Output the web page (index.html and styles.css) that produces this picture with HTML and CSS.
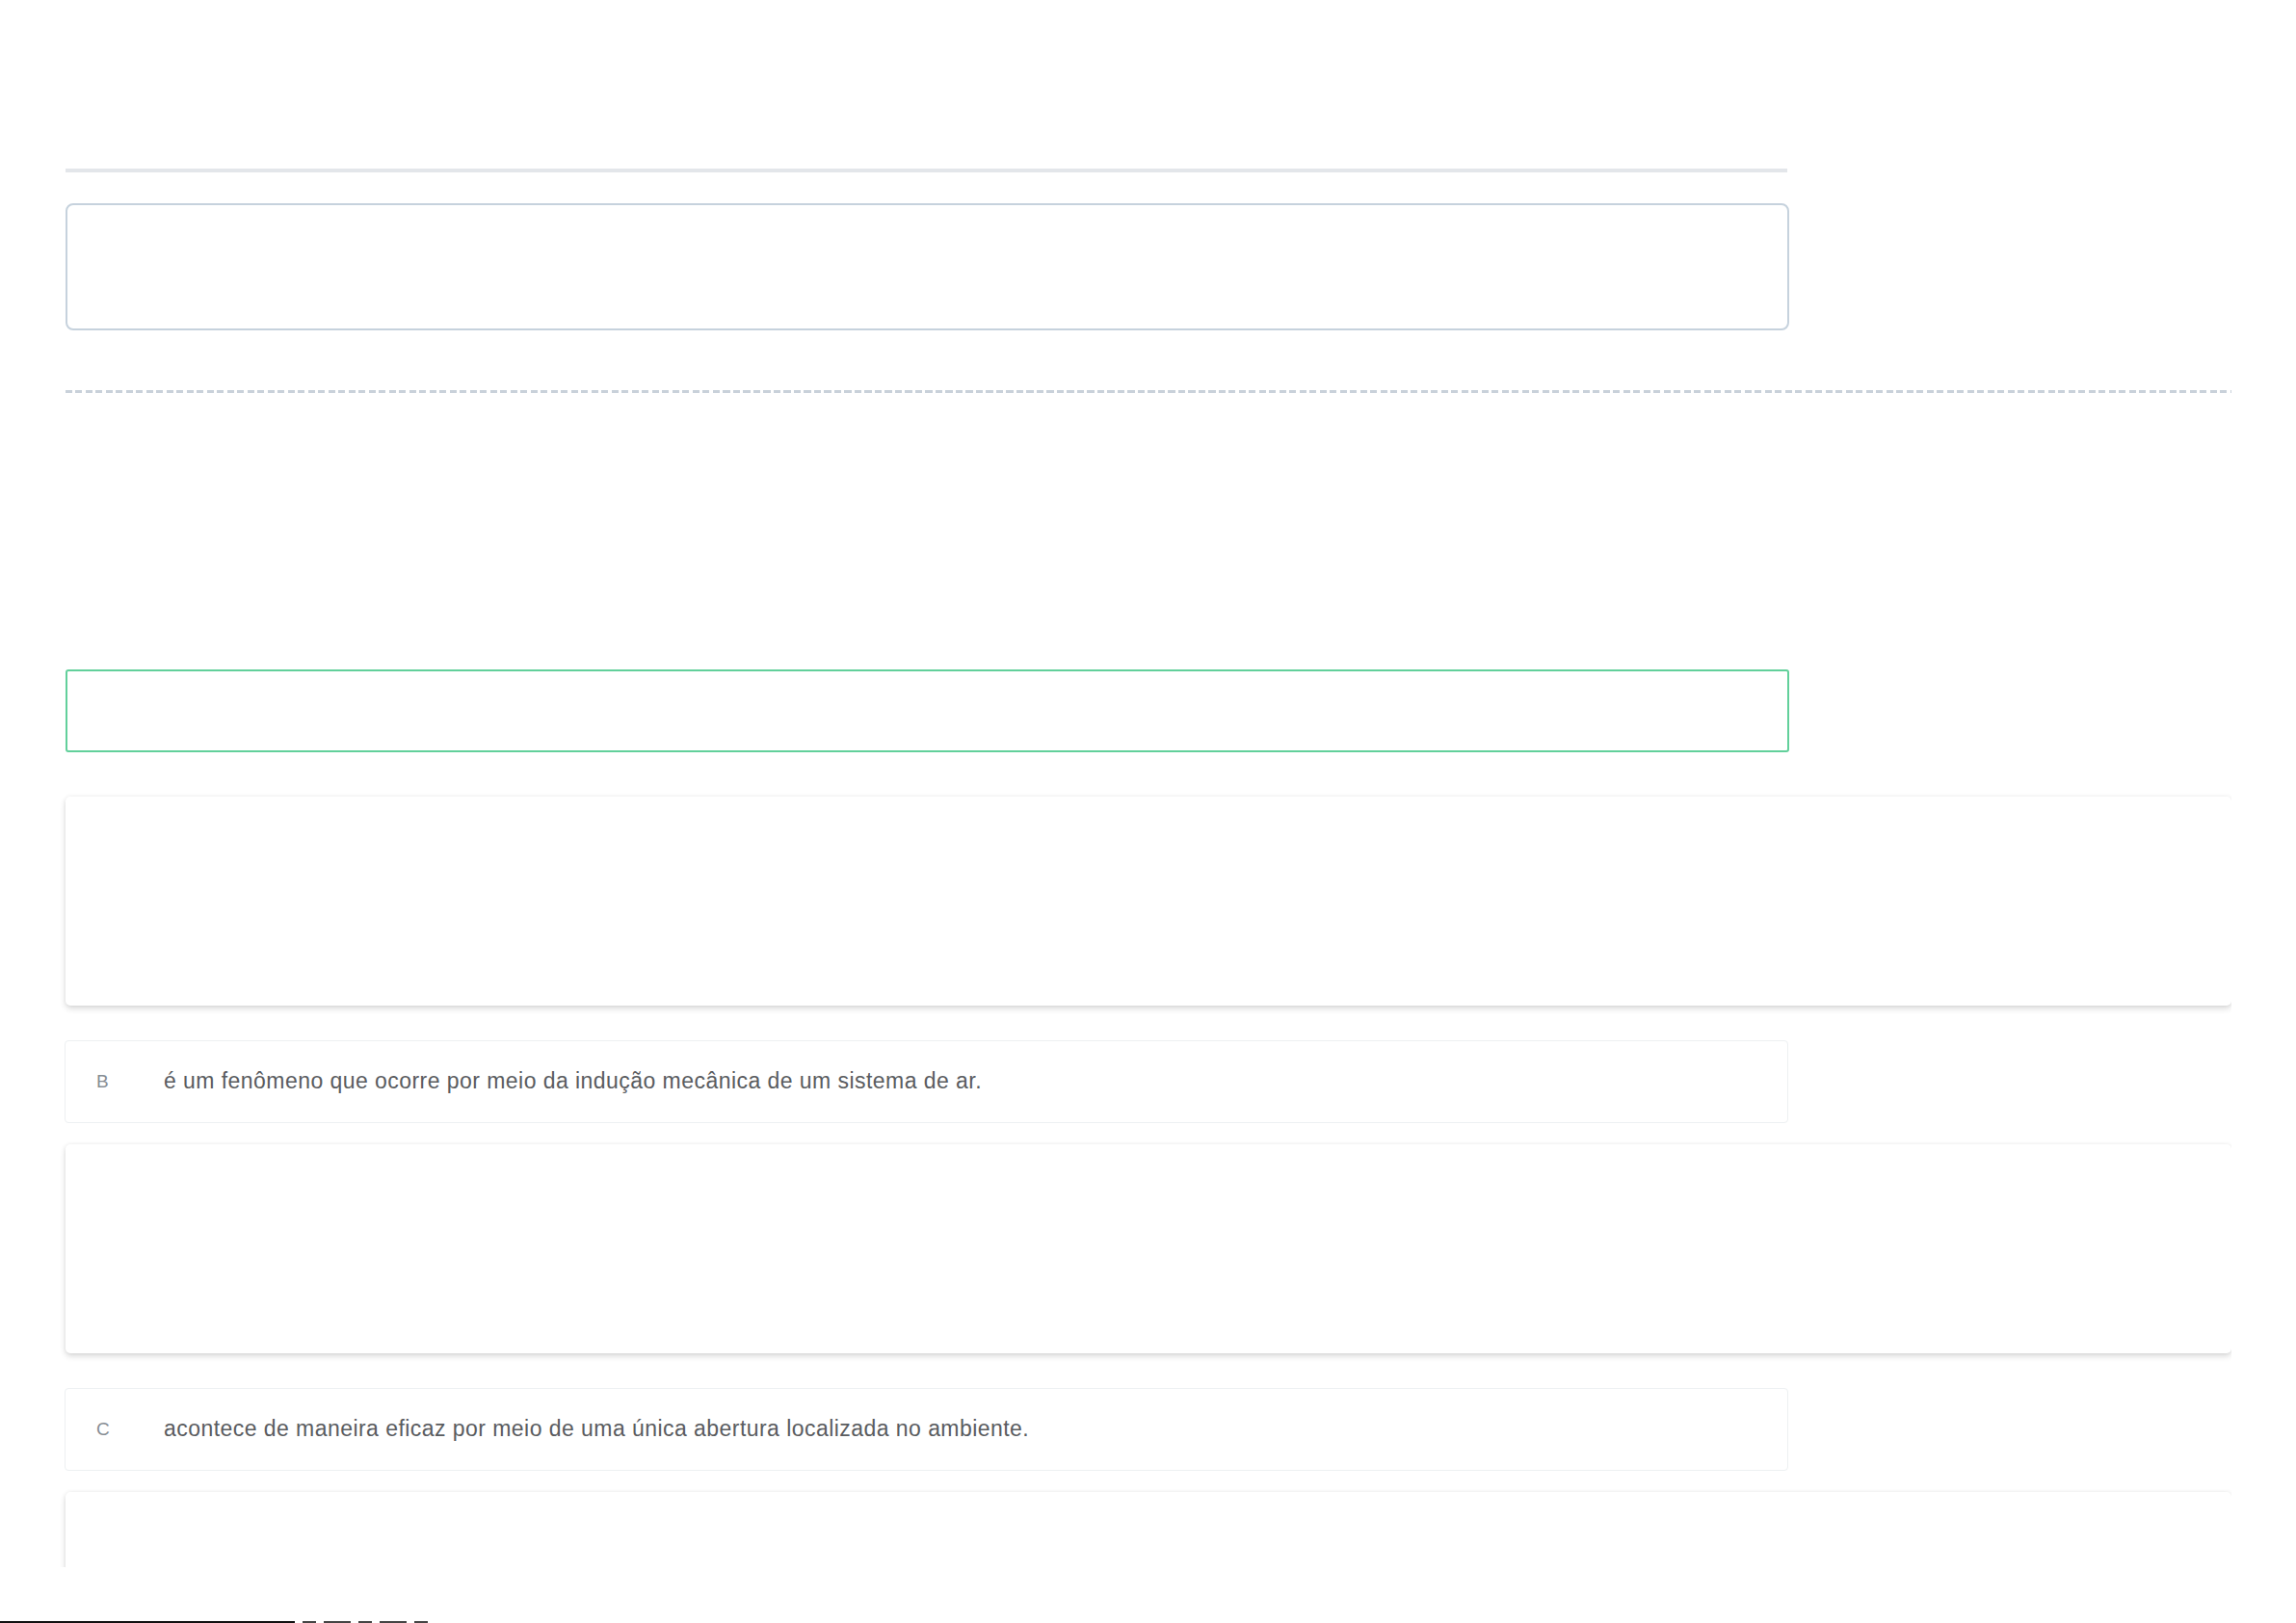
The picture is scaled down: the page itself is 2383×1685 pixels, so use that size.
FILE: index.html
```html
<!DOCTYPE html>
<html lang="pt-BR">
<head>
<meta charset="utf-8">
<title>Questão</title>
<link rel="stylesheet" href="styles.css">
</head>
<body>
<div class="page">
  <main class="content">
    <div class="top-rule"></div>
    <div class="statement-box"></div>
    <div class="dashed-rule"></div>
    <div class="answer-field"></div>
    <div class="card"></div>
    <div class="option">
      <span class="option-letter">B</span>
      <span class="option-text">é um fenômeno que ocorre por meio da indução mecânica de um sistema de ar.</span>
    </div>
    <div class="card card-mid"></div>
    <div class="option">
      <span class="option-letter">C</span>
      <span class="option-text">acontece de maneira eficaz por meio de uma única abertura localizada no ambiente.</span>
    </div>
    <div class="card card-mid"></div>
  </main>
  <div class="bottom-artifact">
    <span class="artifact-line"></span>
    <span class="artifact-bit"></span>
    <span class="artifact-bit wide"></span>
    <span class="artifact-bit"></span>
    <span class="artifact-bit wide"></span>
    <span class="artifact-bit"></span>
  </div>
</div>
</body>
</html>
```
FILE: styles.css
```css
html, body {
  margin: 0;
  padding: 0;
  background: #ffffff;
  font-family: "Liberation Sans", Arial, sans-serif;
}

.page {
  width: 2383px;
  height: 1685px;
  overflow: hidden;
  position: relative;
}

.content {
  height: 1627px;
  overflow: hidden;
  padding-left: 68px;
  display: flex;
  flex-direction: column;
  box-sizing: border-box;
  width: 2316px;
}

.top-rule {
  margin-top: 175px;
  width: 1787px;
  height: 4px;
  background: #e3e6ea;
  flex: none;
}

.statement-box {
  margin-top: 32px;
  width: 1789px;
  height: 132px;
  box-sizing: border-box;
  border: 2.5px solid #c6d2dd;
  border-radius: 8px;
  flex: none;
}

.dashed-rule {
  margin-top: 62px;
  height: 2.5px;
  width: 100%;
  background: repeating-linear-gradient(to right, #c9d1da 0 7px, transparent 7px 10.5px);
  flex: none;
}

.answer-field {
  margin-top: 287px;
  width: 1789px;
  height: 86px;
  box-sizing: border-box;
  border: 2.5px solid #62d09b;
  border-radius: 3px;
  flex: none;
}

.card {
  margin-top: 46px;
  width: 100%;
  height: 217px;
  background: #ffffff;
  border-radius: 5px;
  box-shadow: 0 3px 6px rgba(0, 0, 0, 0.15), 0 0 4px rgba(0, 0, 0, 0.06);
  flex: none;
}

.card-mid {
  margin-top: 22px;
}

.option {
  margin-top: 36px;
  width: 1789px;
  height: 86px;
  box-sizing: border-box;
  border: 1.5px solid #edf0f2;
  border-radius: 4px;
  display: flex;
  align-items: center;
  padding-left: 32px;
  flex: none;
  margin-left: -1px;
}

.option-letter {
  width: 70px;
  font-size: 19px;
  color: #878d94;
}

.option-text {
  font-size: 23px;
  letter-spacing: 0.45px;
  color: #5a5c5f;
}

.bottom-artifact {
  position: absolute;
  left: 0;
  bottom: 0;
  display: flex;
  align-items: flex-end;
  gap: 8px;
}

.artifact-line {
  width: 306px;
  height: 2px;
  background: #111111;
}

.artifact-bit {
  width: 14px;
  height: 2px;
  background: #444444;
}

.artifact-bit.wide {
  width: 28px;
}
```
